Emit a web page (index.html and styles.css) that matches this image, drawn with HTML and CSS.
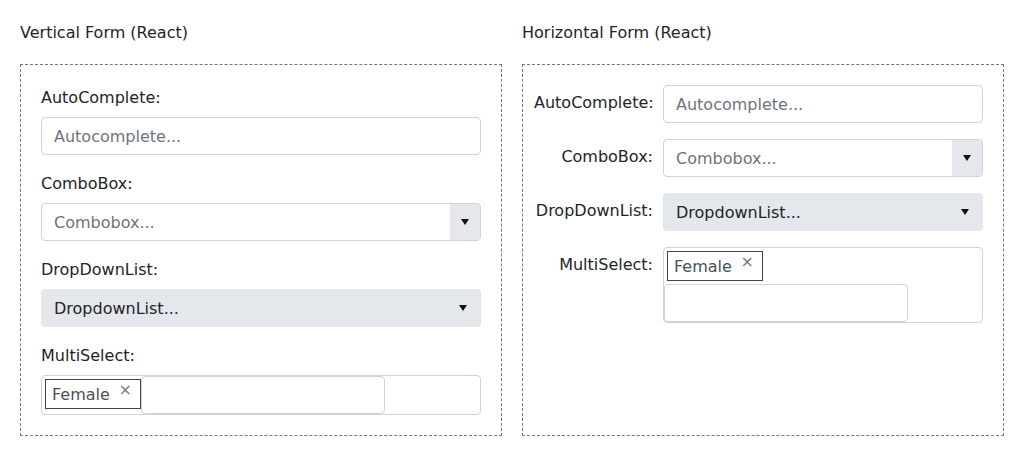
FILE: index.html
```html
<!DOCTYPE html>
<html>
<head>
<meta charset="utf-8">
<link rel="stylesheet" href="styles.css">
</head>
<body>
<div class="page">
  <section class="col">
    <h2 class="title">Vertical Form (React)</h2>
    <div class="box vertical">
      <div class="group">
        <label class="label">AutoComplete:</label>
        <div class="input"><span class="ph">Autocomplete...</span></div>
      </div>
      <div class="group">
        <label class="label">ComboBox:</label>
        <div class="input combo"><span class="ph">Combobox...</span><span class="btn"><span class="caret"></span></span></div>
      </div>
      <div class="group">
        <label class="label">DropDownList:</label>
        <div class="input ddl"><span class="val">DropdownList...</span><span class="caret"></span></div>
      </div>
      <div class="group">
        <label class="label">MultiSelect:</label>
        <div class="multi"><span class="tag"><span class="tagtext">Female</span><span class="x">×</span></span><span class="minput"></span></div>
      </div>
    </div>
  </section>
  <section class="col">
    <h2 class="title">Horizontal Form (React)</h2>
    <div class="box horizontal">
      <label class="label">AutoComplete:</label>
      <div class="input"><span class="ph">Autocomplete...</span></div>
      <label class="label">ComboBox:</label>
      <div class="input combo"><span class="ph">Combobox...</span><span class="btn"><span class="caret"></span></span></div>
      <label class="label">DropDownList:</label>
      <div class="input ddl"><span class="val">DropdownList...</span><span class="caret"></span></div>
      <label class="label">MultiSelect:</label>
      <div class="multi"><span class="tag"><span class="tagtext">Female</span><span class="x">×</span></span><span class="minput"></span></div>
    </div>
  </section>
</div>
</body>
</html>
```
FILE: styles.css
```css
* { box-sizing: border-box; }
html, body { margin: 0; padding: 0; background: #fff; }
body {
  font-family: "DejaVu Sans", sans-serif;
  font-size: 16px;
  line-height: 24px;
  color: #212529;
}
.page {
  display: flex;
  gap: 20px;
  padding: 20px 20px 0 20px;
}
.col { width: 482px; }
.title {
  margin: 0 0 20px 0;
  padding-top: 1px;
  height: 24px;
  font-size: 16px;
  font-weight: normal;
  line-height: 24px;
}
.box {
  border: 1px dashed #777;
  padding: 20px;
}
.vertical .group { margin-bottom: 16px; }
.vertical .group:last-child { margin-bottom: 0; }
.vertical .label {
  display: block;
  margin-bottom: 8px;
  height: 24px;
  padding-top: 1px;
}
.input {
  height: 38px;
  border: 1px solid #ced4da;
  border-radius: 4px;
  padding: 1px 12px 0 12px;
  display: flex;
  align-items: center;
  background: #fff;
}
.ph { color: #6c757d; flex: 1; }
.val { color: #212529; flex: 1; }
.combo { padding-right: 0; overflow: hidden; }
.btn {
  width: 30px;
  align-self: stretch;
  margin-top: -1px;
  background: #e4e7eb;
  display: flex;
  align-items: center;
  justify-content: center;
}
.caret {
  width: 0; height: 0;
  border-left: 4px solid transparent;
  border-right: 4px solid transparent;
  border-top: 6px solid #111;
  margin-top: -1px;
}
.ddl {
  background: #e4e7eb;
  border-color: #e4e7eb;
  padding-right: 13px;
}
.multi {
  border: 1px solid #ced4da;
  border-radius: 4px;
  display: flex;
  flex-wrap: wrap;
  align-items: flex-start;
}
.tag {
  margin: 3px 0 3px 3px;
  height: 30px;
  border: 1px solid #444;
  padding: 0 8px 0 6px;
  display: flex;
  align-items: center;
  color: #495057;
  width: 96px;
}
.tagtext { padding-top: 1px; }
.x {
  margin-left: auto;
  align-self: flex-start;
  margin-top: 2px;
  color: #7a7a7a;
  font-size: 16px;
  line-height: 16px;
}
.minput {
  width: 244px;
  height: 38px;
  border: 1px solid #ced4da;
  border-radius: 4px;
}
.horizontal {
  display: grid;
  grid-template-columns: 119px 1fr;
  column-gap: 10px;
  row-gap: 16px;
  padding: 20px 20px 20px 11px;
  align-items: start;
  min-height: 372px;
  align-content: start;
}
.horizontal .label {
  text-align: right;
  white-space: nowrap;
  padding-top: 6px;
}
```
